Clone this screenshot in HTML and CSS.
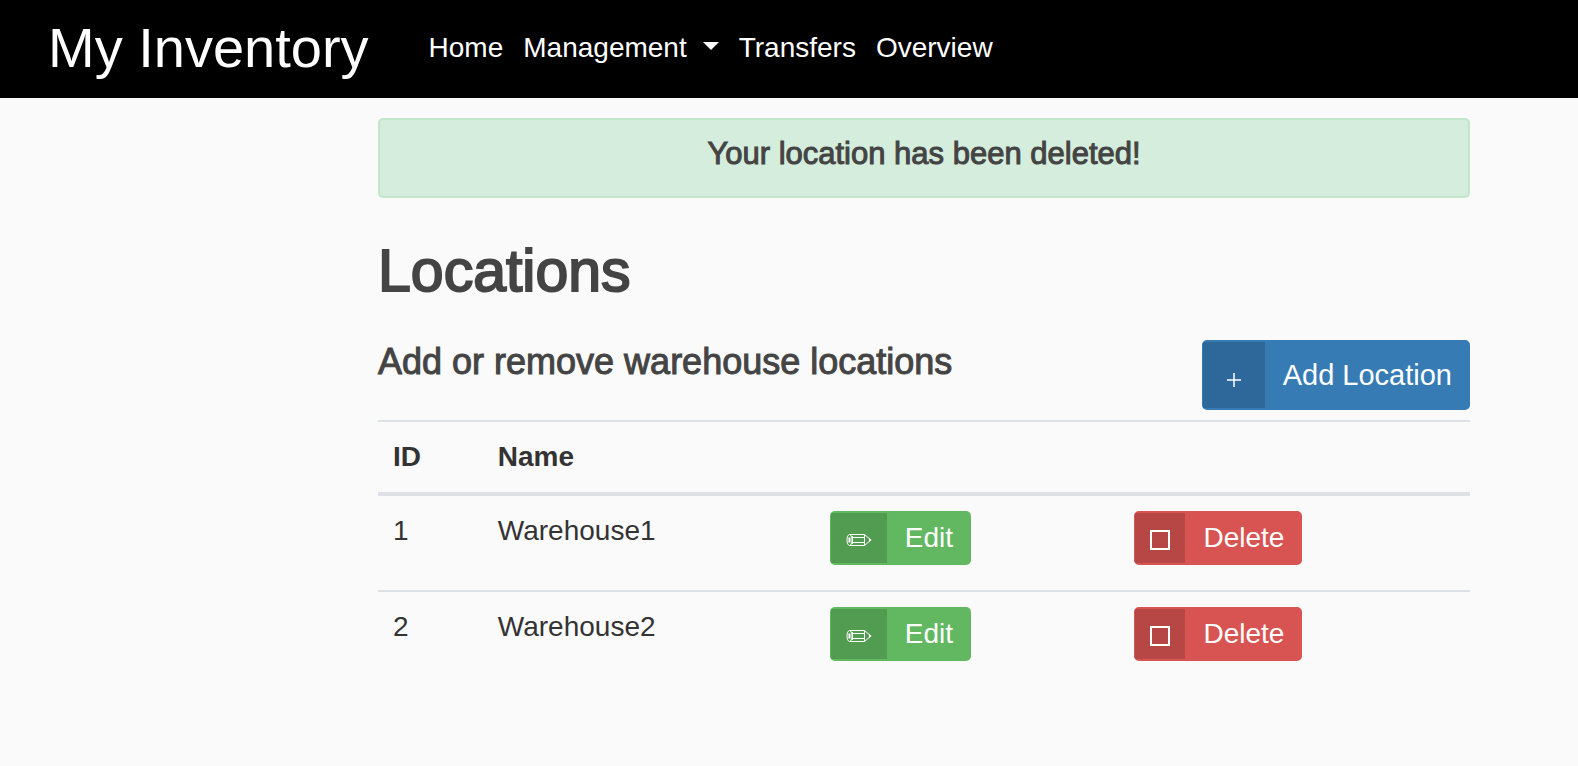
FILE: index.html
```html
<!DOCTYPE html>
<html lang="en">
<head>
<meta charset="utf-8">
<title>My Inventory - Locations</title>
<link rel="stylesheet" href="styles.css">
</head>
<body>
<header class="navbar">
  <a class="brand" href="#">My Inventory</a>
  <nav class="nav">
    <a class="nav-link" href="#">Home</a>
    <a class="nav-link dropdown" href="#">Management</a>
    <a class="nav-link" href="#">Transfers</a>
    <a class="nav-link" href="#">Overview</a>
  </nav>
</header>
<main class="content">
  <div class="alert" role="status">Your location has been deleted!</div>
  <h1 class="title">Locations</h1>
  <div class="toolbar">
    <h2 class="subtitle">Add or remove warehouse locations</h2>
    <button class="btn btn-add" type="button">
      <span class="btn-icon"><svg width="16" height="16" viewBox="0 0 16 16"><path d="M1 8h14M8 1v14" stroke="#fff" stroke-width="1.5"/></svg></span>
      <span class="btn-label">Add Location</span>
    </button>
  </div>
  <table class="table">
    <thead>
      <tr><th class="col-id">ID</th><th class="col-name">Name</th><th class="col-edit"></th><th class="col-delete"></th></tr>
    </thead>
    <tbody>
      <tr>
        <td>1</td><td>Warehouse1</td>
        <td><button class="btn btn-edit" type="button"><span class="btn-icon"><svg width="26" height="14" viewBox="0 0 26 14"><g fill="none" stroke="#fff"><path d="M4 1.500h14.500L25 7l-6.500 5.500H4M6 4.500h12.500M6 9.500h12.500M18.500 1.500v11M6.500 3v8"/><ellipse cx="3.500" cy="7" rx="2.500" ry="5.500"/><path d="M3.500 4.500v5" stroke-width="2"/></g><path d="M23 5l2.500 2L23 9z" fill="#fff"/></svg></span><span class="btn-label">Edit</span></button></td>
        <td><button class="btn btn-delete" type="button"><span class="btn-icon"><svg width="20" height="20" viewBox="0 0 20 20"><path d="M1 1h18v18H1z" fill="none" stroke="#fff" stroke-width="2"/></svg></span><span class="btn-label">Delete</span></button></td>
      </tr>
      <tr>
        <td>2</td><td>Warehouse2</td>
        <td><button class="btn btn-edit" type="button"><span class="btn-icon"><svg width="26" height="14" viewBox="0 0 26 14"><g fill="none" stroke="#fff"><path d="M4 1.500h14.500L25 7l-6.500 5.500H4M6 4.500h12.500M6 9.500h12.500M18.500 1.500v11M6.500 3v8"/><ellipse cx="3.500" cy="7" rx="2.500" ry="5.500"/><path d="M3.500 4.500v5" stroke-width="2"/></g><path d="M23 5l2.500 2L23 9z" fill="#fff"/></svg></span><span class="btn-label">Edit</span></button></td>
        <td><button class="btn btn-delete" type="button"><span class="btn-icon"><svg width="20" height="20" viewBox="0 0 20 20"><path d="M1 1h18v18H1z" fill="none" stroke="#fff" stroke-width="2"/></svg></span><span class="btn-label">Delete</span></button></td>
      </tr>
    </tbody>
  </table>
</main>
</body>
</html>
```
FILE: styles.css
```css
* { box-sizing: border-box; }
body {
  margin: 0;
  background: #fafafa;
  color: #333;
  font-family: "Liberation Sans", Arial, sans-serif;
  font-size: 28px;
  line-height: 40px;
}
.navbar {
  display: flex;
  align-items: center;
  gap: 60px;
  padding: 14px 48px 16px;
  background: #000;
}
.brand, .nav-link { color: #fff; text-decoration: none; }
.brand { font-size: 56px; line-height: 68px; }
.nav { display: flex; gap: 20px; }
.dropdown { display: flex; align-items: center; gap: 16px; }
.dropdown::after {
  content: "";
  margin-bottom: 4px;
  border: 8px solid transparent;
  border-top-color: #fff;
  border-bottom: 0;
}
.content { padding: 20px 108px 0 378px; }
.alert {
  padding: 16px 24px 24px;
  border: 2px solid #c3e6cb;
  border-radius: 5px;
  background: #d5eddc;
  color: #444;
  font-size: 31px;
  line-height: 36px;
  text-align: center;
  -webkit-text-stroke: 1px #444;
}
.title {
  margin: 38px 0 34px;
  color: #444;
  font-size: 59px;
  font-weight: 400;
  line-height: 70px;
  -webkit-text-stroke: 2px #444;
}
.toolbar {
  display: flex;
  align-items: flex-start;
  justify-content: space-between;
  margin-bottom: 10px;
}
.subtitle {
  margin: 0;
  color: #444;
  font-size: 36px;
  font-weight: 400;
  line-height: 44px;
  -webkit-text-stroke: 1px #444;
}
.btn {
  display: flex;
  padding: 0;
  border: 2px solid;
  border-left-width: 1px;
  border-radius: 5px;
  color: #fff;
  font: inherit;
  line-height: 50px;
}
.btn-icon {
  display: flex;
  align-items: center;
  justify-content: center;
  padding-top: 4px;
  background: rgba(0, 0, 0, 0.15);
}
.btn-label { padding: 0 16px 0 18px; }
.btn-add { border-color: #377bb5; background: #377bb5; font-size: 29px; line-height: 66px; }
.btn-add .btn-icon { width: 62px; padding-top: 10px; }
.btn-edit { border-color: #61b861; background: #61b861; }
.btn-edit .btn-icon { width: 56px; }
.btn-delete { border-color: #d75452; background: #d75452; }
.btn-delete .btn-icon { width: 50px; }
.table {
  width: 100%;
  table-layout: fixed;
  border-collapse: separate;
  border-spacing: 0;
}
.table th, .table td {
  padding: 15px;
  border-top: 2px solid #dee2e6;
  text-align: left;
  vertical-align: top;
}
.table th { border-bottom: 4px solid #dee2e6; }
.table td { height: 94px; }
.table tbody tr + tr td { height: 96px; }
.table tbody tr:first-child td { border-top: 0; }
.col-id { width: 9.6%; }
.col-name { width: 30.4%; }
.col-edit { width: 27.9%; }
```
